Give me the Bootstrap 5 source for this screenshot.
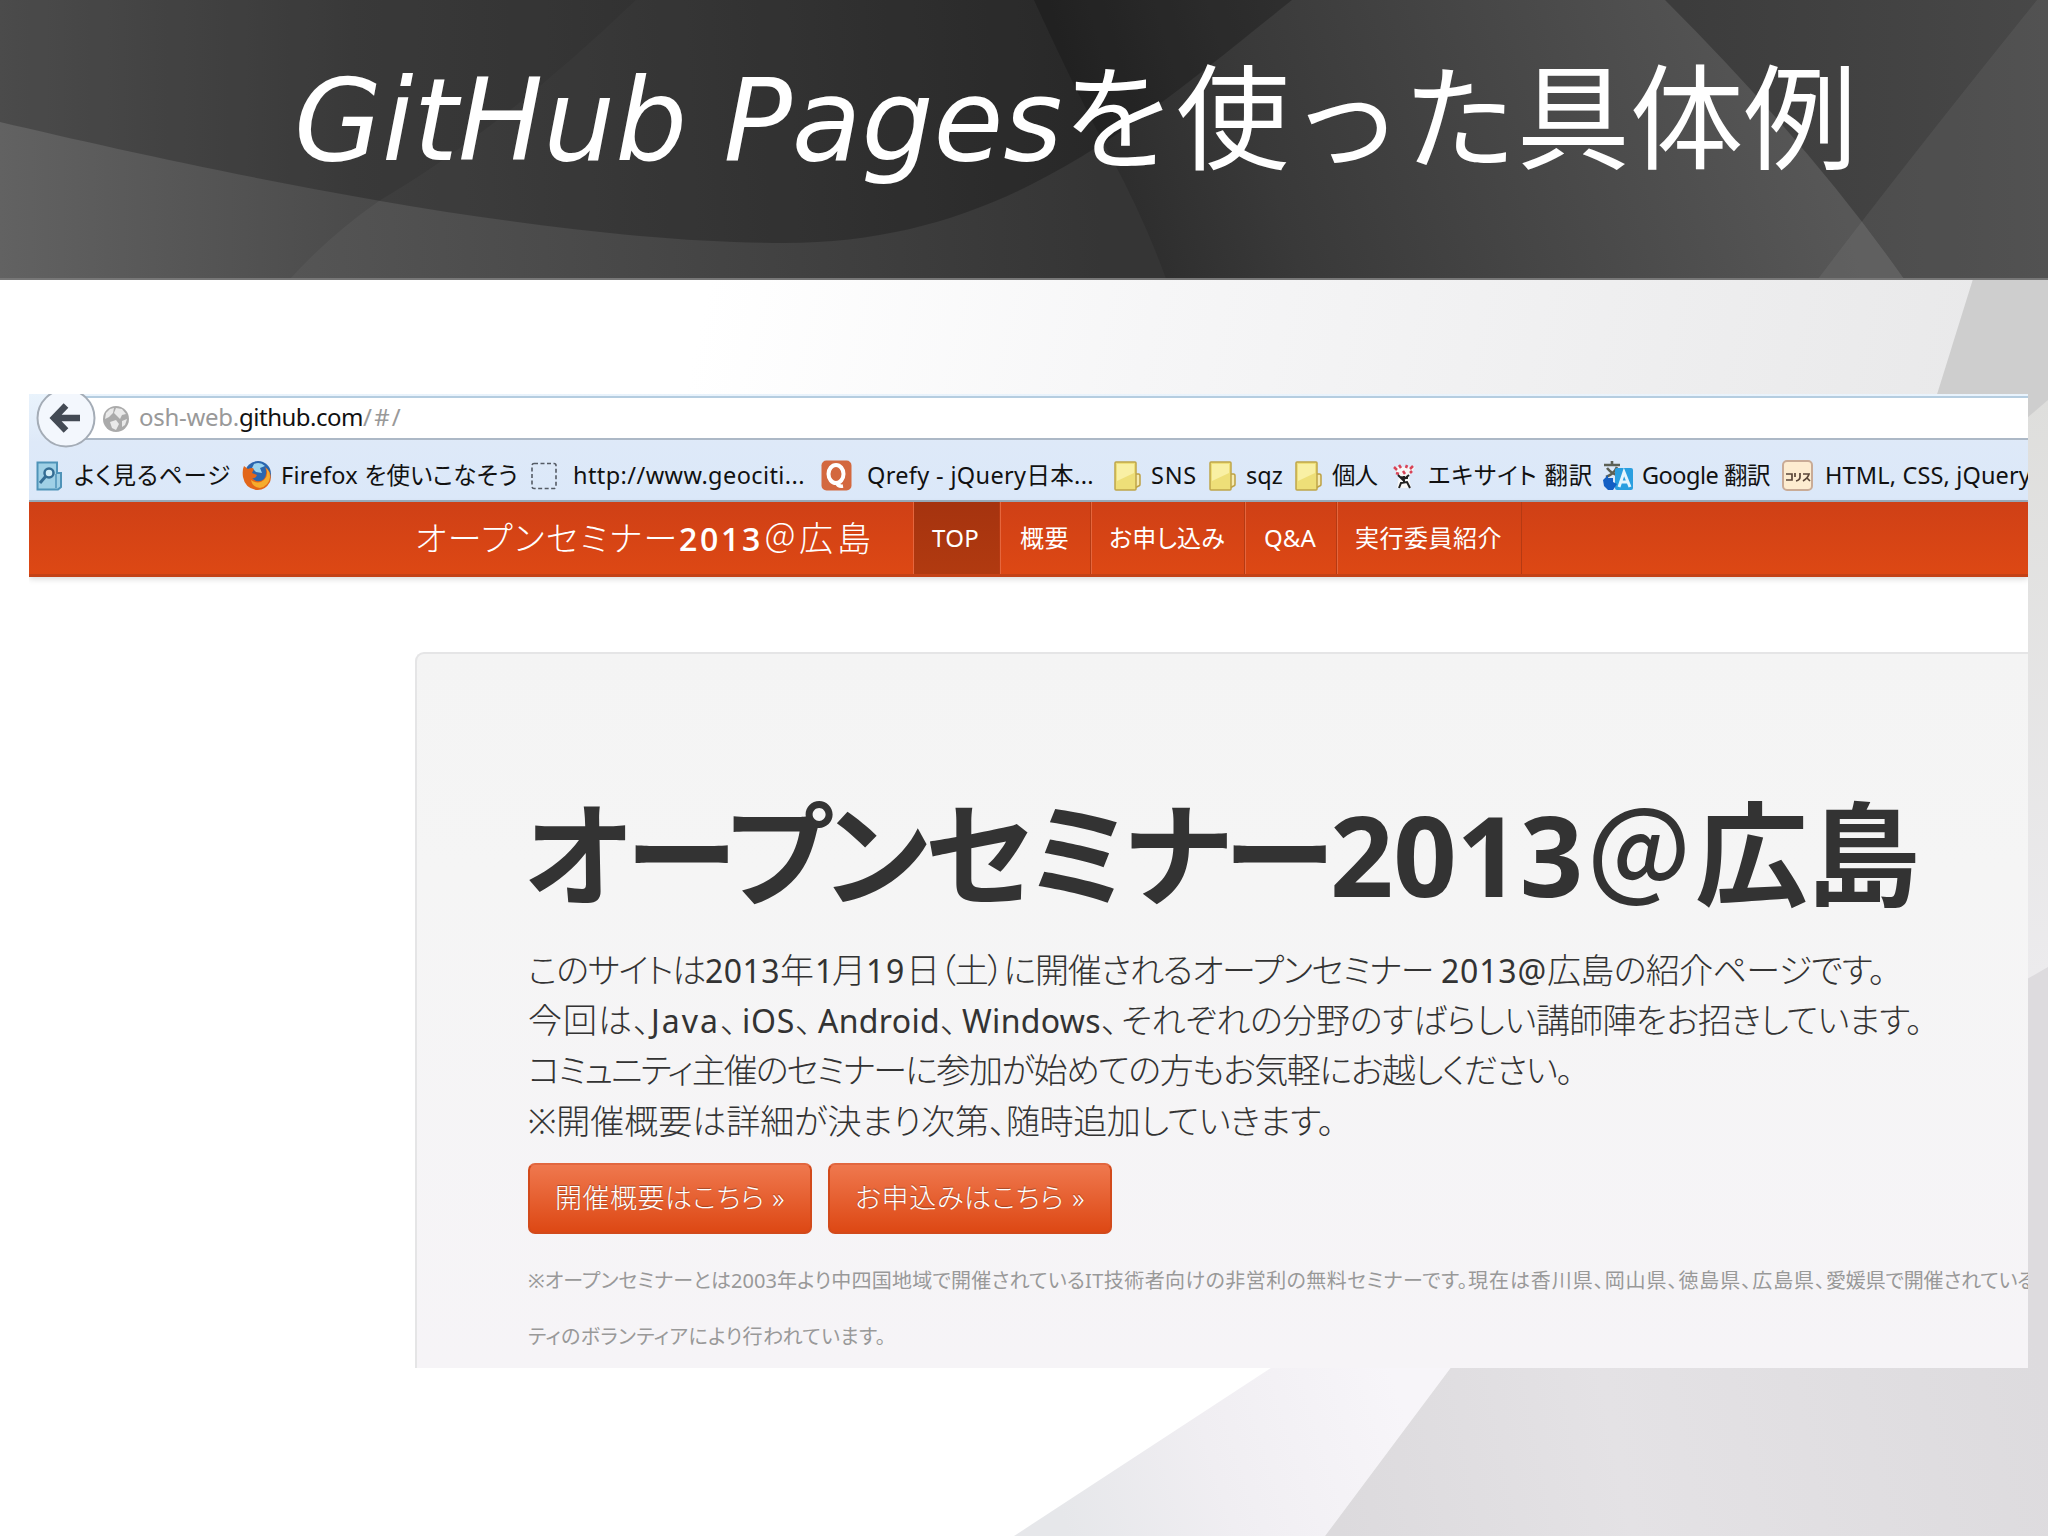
<!DOCTYPE html>
<html lang="ja">
<head>
<meta charset="utf-8">
<title>GitHub Pagesを使った具体例</title>
<link href="https://cdn.jsdelivr.net/npm/bootstrap@5.3.0/dist/css/bootstrap.min.css" rel="stylesheet">
<style>
  body { width: 2048px; height: 1536px; overflow: hidden; background: #fff; font-family: "Noto Sans", "Noto Sans CJK JP", sans-serif; }
  .slide { width: 2048px; height: 1536px; isolation: isolate; }
  .backdrop { inset: 0; z-index: -1; }
  .slide-head { height: 279px; color: #fff; padding: 41px 0 0 294px; }
  .slide-title { font-size: 113.5px; line-height: 140px; font-weight: 400; }
  .t-latin { font-family: "DejaVu Sans", sans-serif; font-style: italic; }
  .t-jp { font-family: "Noto Sans CJK JP", sans-serif; font-weight: 400; }
  .fit { display: inline-block; white-space: pre; font-feature-settings: "palt"; }
  .shot { width: 1999px; height: 974px; margin: 115px 0 0 29px; background: #fff; }
  .tools { height: 108px; background: linear-gradient(#e9f3fc, #dee9f8 45%, #dbe8f9); border-bottom: 2px solid #9badbc; }
  .urlbar { height: 44px; margin-left: 38px; margin-top: 2px; border-top: 2px solid #b5cde0; border-bottom: 2px solid #acb8c6; background: #fff; padding-left: 72px; font-size: 24px; color: #999; font-family: "Noto Sans", sans-serif; line-height: 38px; }
  .urlbar b { color: #111; font-weight: 400; }
  .back { width: 60px; height: 60px; left: 7px; top: -6px; }
  .globe { left: 73px; top: 11px; }
  .marks { height: 66px; padding: 5px 0 0 7px; font-size: 23.5px; color: #111; display: grid; align-items: center; justify-items: start; white-space: nowrap;
    grid-template-columns: 38px 168px 39px 250px 42px 248px 46px 247px 37px 58px 37px 49px 37px 60px 36px 175px 39px 140px 43px 210px; }
  .marks svg { display: block; }
  .osh-nav { height: 75px; background: linear-gradient(#cf4016, #dd4814); border-bottom: 3px solid #c34217; box-shadow: 0 2px 6px rgba(0,0,0,.15); color: #fff; padding: 0 0 0 386px; font-size: 24px; }
  .osh-brand { width: 498px; font-size: 34px; line-height: 70px; font-weight: 300; }
  .osh-brand .yr { font-size: 32px; font-weight: 600; font-family: "Open Sans", sans-serif; }
  .osh-brand .at { font-family: "Noto Sans CJK JP", sans-serif; font-feature-settings: normal; }
  .osh-link { border-right: 1px solid #b53a13; border-left: 1px solid #e5663d; display: flex; align-items: center; justify-content: center; color: #fff; font-weight: 400; padding: 0 2px 1px 0; }
  .osh-link.on { background: linear-gradient(#a5330f, #b13a10); }
  .hero { margin: 75px 0 0 386px; height: 717px; background: linear-gradient(#f4f4f4, #f5f5f5 30%, #f6f4f7); border: 2px solid #e5e5e6; border-right: 0; border-bottom: 0; border-top-left-radius: 9px; padding: 122px 0 0 111px; color: #333; }
  .hero-title { font-size: 113px; line-height: 150px; font-weight: 700; letter-spacing: 0; margin: 0 0 0 -4px; height: 150px; }
  .hero-title .yr { font-family: "Open Sans", sans-serif; font-weight: 700; font-size: 111px; }
  .hero-title .at { font-family: "Noto Sans CJK JP", sans-serif; font-weight: 500; font-size: 106px; text-indent: 3px; }
  .intro { font-size: 34px; line-height: 50.2px; font-weight: 300; margin-top: 19px; }
  .intro > div { height: 50.2px; }
  .intro i { font-style: normal; font-weight: 400; font-size: 32px; }
  .actions { gap: 16px; margin-top: 17px; }
  .cta { height: 71px; border-radius: 7px; background: linear-gradient(#ef784e, #dd4814); border: 2px solid #d24a1b; border-top-color: #e2673f; color: #fff; font-size: 27px; font-weight: 300; text-shadow: 0 -1px 1px rgba(0,0,0,.3); padding: 0; width: 284px; display: flex; align-items: center; justify-content: center; }
  .cta:hover { color: #fff; }
  .fine { font-size: 20px; line-height: 56px; color: #999; margin-top: 19px; white-space: nowrap; }
</style>
<script src="https://cdn.jsdelivr.net/npm/bootstrap@5.3.0/dist/js/bootstrap.bundle.min.js"></script>
</head>
<body>
<div class="slide position-relative d-flex flex-column">
  <svg class="backdrop position-absolute" width="2048" height="1536" viewBox="0 0 2048 1536">
    <defs>
      <linearGradient id="z1" gradientUnits="userSpaceOnUse" x1="0" y1="0" x2="640" y2="0"><stop offset="0" stop-color="#626262"/><stop offset=".55" stop-color="#4b4b4b"/><stop offset="1" stop-color="#424242"/></linearGradient>
      <linearGradient id="z2" gradientUnits="userSpaceOnUse" x1="290" y1="240" x2="1100" y2="200"><stop offset="0" stop-color="#555"/><stop offset=".5" stop-color="#454545"/><stop offset="1" stop-color="#353535"/></linearGradient>
      <linearGradient id="z3" gradientUnits="userSpaceOnUse" x1="1110" y1="260" x2="1800" y2="60"><stop offset="0" stop-color="#2b2b2b"/><stop offset=".25" stop-color="#393939"/><stop offset=".6" stop-color="#474747"/><stop offset="1" stop-color="#575757"/></linearGradient>
      <linearGradient id="z4" gradientUnits="userSpaceOnUse" x1="1680" y1="0" x2="2048" y2="0"><stop offset="0" stop-color="#3c3c3c"/><stop offset="1" stop-color="#484848"/></linearGradient>
      <linearGradient id="b0" gradientUnits="userSpaceOnUse" x1="720" y1="230" x2="1950" y2="500"><stop offset="0" stop-color="#fff"/><stop offset=".35" stop-color="#f6f6f7"/><stop offset="1" stop-color="#e9e9ea"/></linearGradient>
      <linearGradient id="b1" gradientUnits="userSpaceOnUse" x1="1060" y1="1510" x2="1400" y2="1400"><stop offset="0" stop-color="#e6e7ea"/><stop offset=".45" stop-color="#f0eef2"/><stop offset="1" stop-color="#f7f5f9"/></linearGradient>
      <linearGradient id="b2" gradientUnits="userSpaceOnUse" x1="1340" y1="1536" x2="2048" y2="1400"><stop offset="0" stop-color="#dcdadd"/><stop offset=".4" stop-color="#e4e2e5"/><stop offset="1" stop-color="#dddbde"/></linearGradient>
      <linearGradient id="b3" gradientUnits="userSpaceOnUse" x1="0" y1="400" x2="0" y2="975"><stop offset="0" stop-color="#dededc"/><stop offset="1" stop-color="#ecebed"/></linearGradient>
    </defs>
    <rect width="2048" height="1536" fill="#fff"/>
    <rect y="279" width="2048" height="130" fill="url(#b0)"/>
    <path d="M1973 279H2048V420H1929Z" fill="#cecece"/>
    <path d="M2020 424L2048 400V980H2020Z" fill="url(#b3)"/>
    <path d="M1274 1366H1452L1325 1536H1014Z" fill="url(#b1)"/>
    <path d="M1452 1366H2020V983L2048 967V1536H1325Z" fill="url(#b2)"/>
    <rect width="2048" height="279" fill="url(#z2)"/>
    <path d="M0 0H636Q500 130 379 201Q330 235 290 279H0Z" fill="url(#z1)"/>
    <path d="M1034 0Q1075 90 1110 155Q1145 220 1166 279H1950V0Z" fill="url(#z3)"/>
    <path d="M1665 0H2048V279H1904Q1810 145 1665 0Z" fill="url(#z4)"/>
    <path d="M2037 0H2048V279H1818Q1900 170 2037 0Z" fill="#fff" fill-opacity=".06"/>
    <path d="M0 122C196 168 540 243 784 243C1000 243 1130 130 1292 0H0Z" fill="#000" fill-opacity=".23"/>
    <rect y="278" width="2048" height="2" fill="#777"/>
  </svg>

  <header class="slide-head">
    <h1 class="slide-title mb-0 text-nowrap"><span class="t-latin">GitHub Pages</span><span class="t-jp">を使った具体例</span></h1>
  </header>

  <main class="shot overflow-hidden">
    <div class="tools position-relative overflow-hidden">
      <div class="urlbar"><span class="fit" data-w="100">osh-web.</span><b class="fit" data-w="124">github.com</b><span class="fit" data-w="40">/#/</span></div>
      <svg class="back position-absolute" viewBox="0 0 60 60"><circle cx="30" cy="30" r="28.500" fill="#f3f7fd" stroke="#a4acb6" stroke-width="2"/><path d="M44 30H21M30 17.500L18 30L30 42.500" fill="none" stroke="#434a54" stroke-width="6.500"/></svg>
      <svg class="globe position-absolute" width="28" height="28" viewBox="0 0 28 28"><circle cx="14" cy="14" r="13" fill="#aaa"/><path d="M4 8L8 4L12 3L11 8L7 12L3 14ZM14 3L20 4L24 9L20 10L18 14L14 10L12 8ZM8 17L14 15L17 19L14 25L10 23ZM20 16L25 14L23 20L20 22Z" fill="#e9e9e9"/></svg>
      <div class="marks">
        <svg width="27" height="30" viewBox="0 0 27 30"><path d="M1.500 1.500H21V12H25V26L22 28.500H1.500Z" fill="#9fd0e6" stroke="#4f93b8" stroke-width="2"/><path d="M20 13V27" stroke="#4f93b8" stroke-width="1.500"/><circle cx="13" cy="12" r="4.500" fill="#d2ecf6" stroke="#346d94" stroke-width="2.500"/><path d="M10 15L4 22" stroke="#346d94" stroke-width="3"/></svg>
        <span class="fit" data-w="157">よく見るページ</span>
        <svg width="30" height="31" viewBox="0 0 30 31"><circle cx="16" cy="14" r="13" fill="#2b66ae"/><path d="M12 4Q18 1 23 6L18 8L20 13L14 12L10 8Z" fill="#9cd4ee"/><path d="M2 6L6 9Q10 7 12 9L10 13L15 15Q14 19 10 18Q16 24 22 19Q26 13 23 7Q31 13 28 22Q23 31 14 30Q3 28 1 17Q0 10 2 6Z" fill="#e2661a"/><path d="M24 8Q27 15 22 20Q16 25 9 20Q10 27 18 28Q27 26 28 17Q28 11 24 8Z" fill="#f6ac2d"/></svg>
        <span class="fit" data-w="237">Firefox を使いこなそう</span>
        <svg width="26" height="28" viewBox="0 0 26 28"><rect x="1" y="1.500" width="24" height="25" rx="2" fill="none" stroke="#555b65" stroke-width="1.600" stroke-dasharray="4 2.500"/></svg>
        <span class="fit" data-w="232">http://www.geociti...</span>
        <svg width="31" height="31" viewBox="0 0 31 31"><rect x=".5" y=".5" width="30" height="30" rx="5" fill="#d3683f"/><ellipse cx="15" cy="14" rx="7.500" ry="9" fill="none" stroke="#fff" stroke-width="4"/><path d="M15 22Q17 27 22 26" fill="none" stroke="#fff" stroke-width="3.500"/></svg>
        <span class="fit" data-w="227">Qrefy - jQuery日本...</span>
        <svg width="27" height="30" viewBox="0 0 27 30"><path d="M21 13H24.500Q26 13 26 15V23Q26 25 24.500 25L21 27Z" fill="#f6ebb0" stroke="#bda042" stroke-width="1.500"/><rect x="1" y="1" width="21" height="28" rx="1" fill="#eedf78" stroke="#bfa548" stroke-width="1.500"/><path d="M3 3H20V12L3 20Z" fill="#f9f0a4"/></svg>
        <span class="fit" data-w="46">SNS</span>
        <svg width="27" height="30" viewBox="0 0 27 30"><path d="M21 13H24.500Q26 13 26 15V23Q26 25 24.500 25L21 27Z" fill="#f6ebb0" stroke="#bda042" stroke-width="1.500"/><rect x="1" y="1" width="21" height="28" rx="1" fill="#eedf78" stroke="#bfa548" stroke-width="1.500"/><path d="M3 3H20V12L3 20Z" fill="#f9f0a4"/></svg>
        <span class="fit" data-w="37">sqz</span>
        <svg width="27" height="30" viewBox="0 0 27 30"><path d="M21 13H24.500Q26 13 26 15V23Q26 25 24.500 25L21 27Z" fill="#f6ebb0" stroke="#bda042" stroke-width="1.500"/><rect x="1" y="1" width="21" height="28" rx="1" fill="#eedf78" stroke="#bfa548" stroke-width="1.500"/><path d="M3 3H20V12L3 20Z" fill="#f9f0a4"/></svg>
        <span class="fit" data-w="45">個人</span>
        <svg width="24" height="28" viewBox="0 0 24 28"><path d="M1 5H23L17 14L19 26H5L7 14Z" fill="#f8f8f8"/><path d="M2 5L5 8M7 3L9 6M15 3L14 6M21 4L18 7M4 11L7 12M11 9L13 12M18 11L20 9" stroke="#d84458" stroke-width="2.500"/><path d="M8 15L16 16M12 14V20M7 26L9 21L15 20L18 26M6 13L11 18L17 13" fill="none" stroke="#222" stroke-width="2"/></svg>
        <span class="fit" data-w="165">エキサイト 翻訳</span>
        <svg width="30" height="31" viewBox="0 0 30 31"><path d="M1 5H17M9 1V5M4 8Q9 14 16 16M14 7Q11 14 3 17" fill="none" stroke="#5c6055" stroke-width="2.600"/><rect x="12" y="8" width="18" height="22" rx="2" fill="#2a9fe0"/><path d="M16 27L21 12L27 27M18 22H25" fill="none" stroke="#e5f5fd" stroke-width="3"/><path d="M0 20L5 15V18H10V22L14 24L10 30H5L1 26Z" fill="#145fc4"/></svg>
        <span class="fit" data-w="128">Google 翻訳</span>
        <svg width="31" height="31" viewBox="0 0 31 31"><rect x="1" y="1" width="29" height="29" rx="4" fill="#fdecd0" stroke="#c9ab96" stroke-width="2"/><path d="M4 14H10V20H4M13 13V17M18 13V17Q18 20 14 21M21 14H27Q26 18 21 21M24.500 17.500L28 21" fill="none" stroke="#5a4638" stroke-width="1.700"/></svg>
        <span class="fit" data-w="206">HTML, CSS, jQuery</span>
      </div>
    </div>

    <nav class="osh-nav d-flex position-relative">
      <div class="osh-brand text-nowrap"><span class="fit" data-w="264">オープンセミナー</span><span class="fit yr" data-w="84">2013</span><span class="fit at" data-w="36">＠</span><span class="fit" data-w="76">広島</span></div>
      <a class="osh-link on text-decoration-none" style="width:87px"><span class="fit" data-w="47">TOP</span></a>
      <a class="osh-link text-decoration-none" style="width:91px"><span class="fit" data-w="49">概要</span></a>
      <a class="osh-link text-decoration-none" style="width:154px"><span class="fit" data-w="116">お申し込み</span></a>
      <a class="osh-link text-decoration-none" style="width:92px"><span class="fit" data-w="52">Q&amp;A</span></a>
      <a class="osh-link text-decoration-none" style="width:185px"><span class="fit" data-w="147">実行委員紹介</span></a>
    </nav>

    <section class="hero">
      <h2 class="hero-title text-nowrap"><span class="fit" data-w="806">オープンセミナー</span><span class="fit yr" data-w="253">2013</span><span class="fit at" data-w="112">＠</span><span class="fit" data-w="224">広島</span></h2>
      <div class="intro text-nowrap">
        <div><span class="fit" data-w="177">このサイトは</span><i class="fit" data-w="75">2013</i><span class="fit" data-w="35">年</span><i class="fit" data-w="17">1</i><span class="fit" data-w="34">月</span><i class="fit" data-w="40">19</i><span class="fit" data-w="129">日（土）に</span><span class="fit" data-w="157">開催される</span><span class="fit" data-w="249">オープンセミナー </span><i class="fit" data-w="106">2013@</i><span class="fit" data-w="338">広島の紹介ページです。</span></div>
        <div><span class="fit" data-w="123">今回は、</span><i class="fit" data-w="69">Java</i><span class="fit" data-w="22">、</span><i class="fit" data-w="53">iOS</i><span class="fit" data-w="23">、</span><i class="fit" data-w="122">Android</i><span class="fit" data-w="22">、</span><i class="fit" data-w="139">Windows</i><span class="fit" data-w="20">、</span><span class="fit" data-w="415">それぞれの分野のすばらしい</span><span class="fit" data-w="386">講師陣をお招きしています。</span></div>
        <div><span class="fit" data-w="377">コミュニティ主催のセミナー</span><span class="fit" data-w="667">に参加が始めての方もお気軽にお越しください。</span></div>
        <div><span class="fit" data-w="478">※開催概要は詳細が決まり次第、</span><span class="fit" data-w="328">随時追加していきます。</span></div>
      </div>
      <div class="d-flex actions">
        <a class="btn cta"><span class="fit" data-w="230">開催概要はこちら »</span></a>
        <a class="btn cta"><span class="fit" data-w="230">お申込みはこちら »</span></a>
      </div>
      <div class="fine">
        <div><span class="fit" data-w="203">※オープンセミナーとは</span><span class="fit" data-w="46">2003</span><span class="fit" data-w="308">年より中四国地域で開催されている</span><span class="fit" data-w="383">IT技術者向けの非営利の無料セミナーです。</span><span class="fit" data-w="358">現在は香川県、岡山県、徳島県、広島県、</span><span class="fit" data-w="209">愛媛県で開催されている</span></div>
        <div><span class="fit" data-w="358">ティのボランティアにより行われています。</span></div>
      </div>
    </section>
  </main>
</div>
<script>
  // Spread each run's glyphs evenly over its measured width
  document.querySelectorAll('.fit').forEach(function (el) {
    var w = parseFloat(el.dataset.w), n = Array.from(el.textContent).length;
    var natural = el.getBoundingClientRect().width;
    el.style.letterSpacing = ((w - natural) / n).toFixed(3) + 'px';
    el.style.width = w + 'px';
  });
</script>
</body>
</html>
